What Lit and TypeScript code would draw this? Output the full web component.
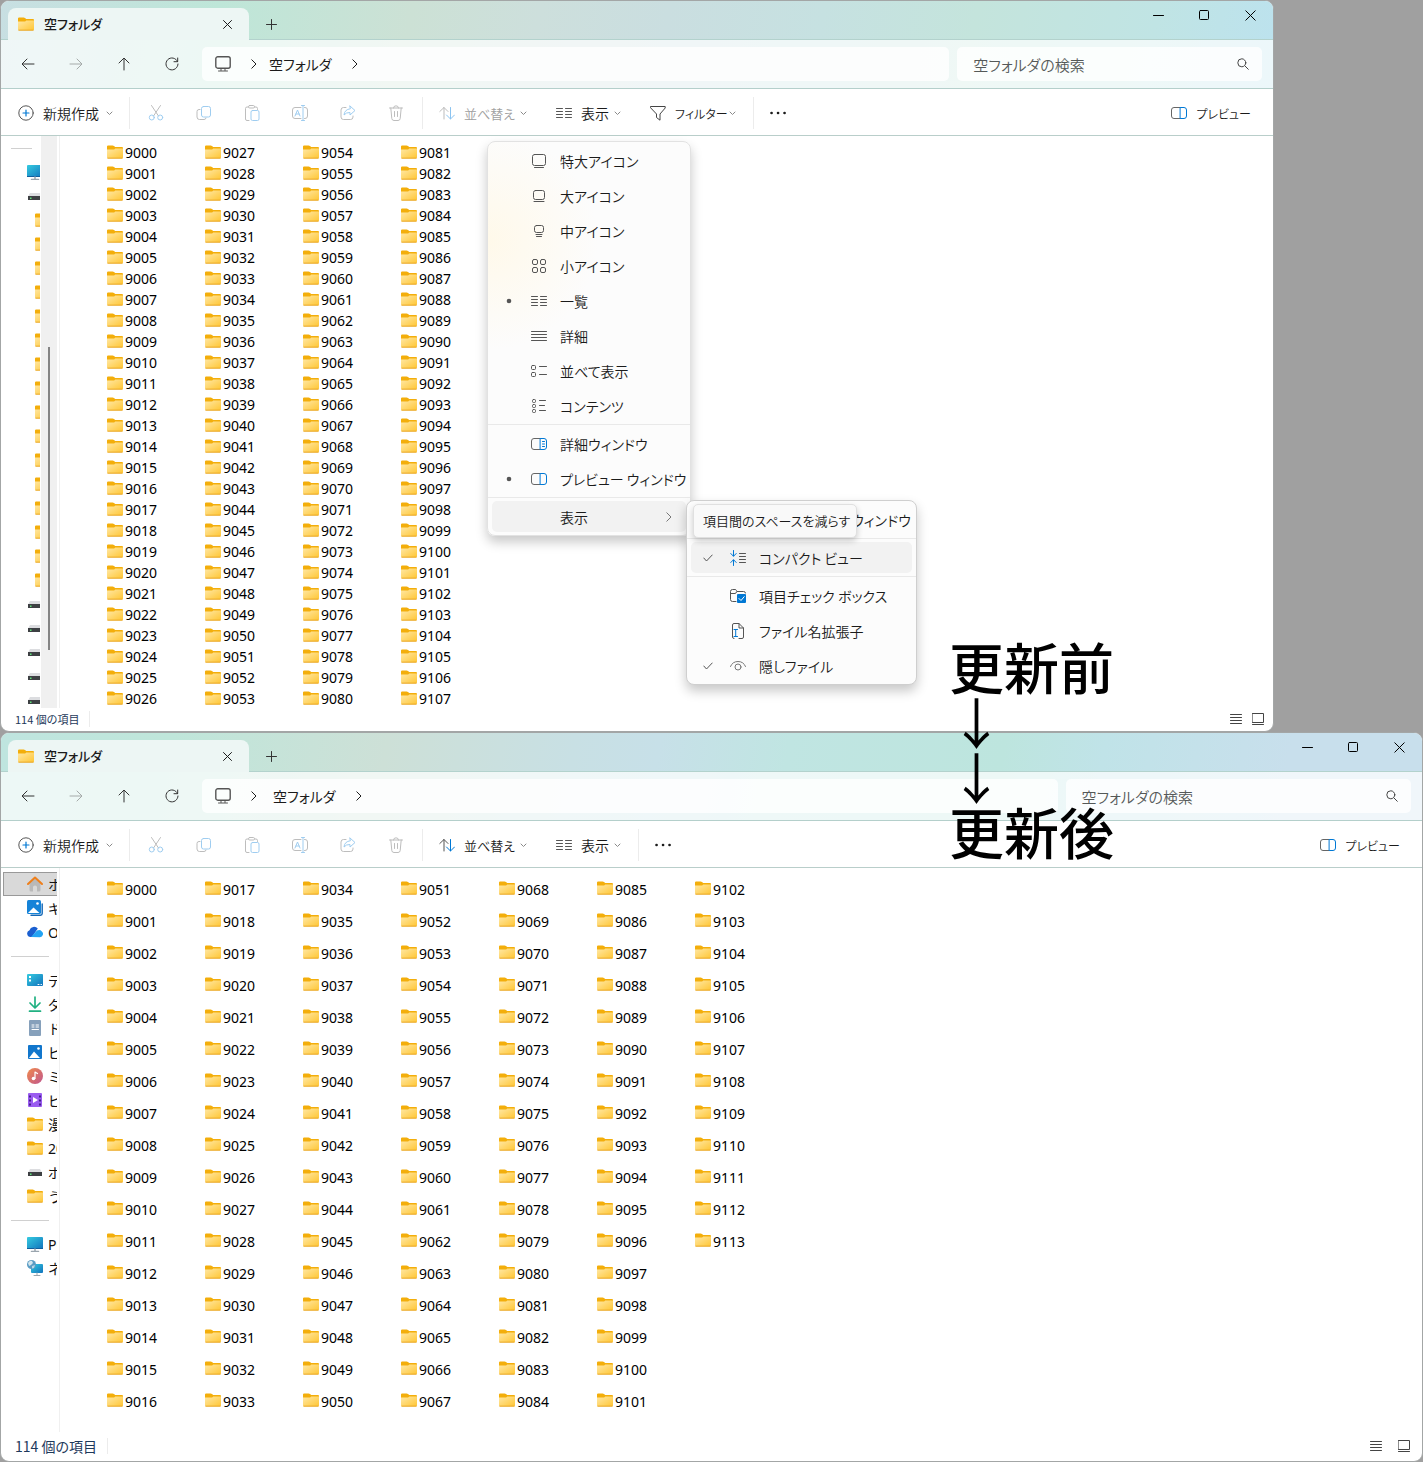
import { LitElement, html, svg, css, nothing, TemplateResult, SVGTemplateResult } from "lit";
import { customElement, property } from "lit/decorators.js";

const BLUE = "#0078d4";

const icon = (w: number, h: number, body: SVGTemplateResult) => html`<svg
  class="icon" width=${w} height=${h} viewBox="0 0 ${w} ${h}" fill="none"
  stroke="currentColor" stroke-width="1" stroke-linecap="round" stroke-linejoin="round"
  aria-hidden="true">${body}</svg>`;

const i16 = (body: SVGTemplateResult) => icon(16, 16, body);

const folder = () => icon(16, 14, svg`
  <path d="M0 3V1.6Q0 .5 1.1 .5H5.6Q6.4 .5 7 1L8.2 2H15Q16 2 16 3V5H0Z" fill="#f3ae0b" stroke="none"/>
  <path d="M0 12.3V4.6H6.3Q7 4.6 7.5 4.2L8.2 3.4H16V12.3Q16 13.3 15 13.3H1Q0 13.3 0 12.3Z" fill="url(#g-folder)" stroke="none"/>
  <path d="M.8 13.2H15.2" stroke="#e9a520"/>`);

const drive = () => i16(svg`
  <path d="M3 5H13L15 8.5H1Z" fill="#dcdde0" stroke="none"/>
  <rect x="1" y="8" width="14" height="4" fill="#3d4043" stroke="none"/>
  <rect x="3" y="9.5" width="1.5" height="1.5" fill="#5fe07a" stroke="none"/>`);

const pc = () => i16(svg`
  <rect x="0" y="1" width="16" height="12" rx="1" fill="url(#g-screen)" stroke="none"/>
  <path d="M0 12.5H16" stroke="#0f5f9e"/>
  <path d="M8 13V15M4.500 15.500H11.500" stroke="#9aa5ae" stroke-width="1.500"/>`);

const network = () => i16(svg`
  <rect x="4" y="4" width="12" height="9" rx="1" fill="url(#g-screen)" stroke="none"/>
  <path d="M10 13V15M7 15.500H13" stroke="#9aa5ae"/>
  <circle cx="4.500" cy="4.500" r="4.500" fill="#5a9cc4" stroke="none"/>
  <path d="M1 3Q3 0 5 1L6 3L4 5L2 6Z" fill="#d4e6ee" stroke="none"/><path d="M5 6L8 5L7 8L5 8.500Z" fill="#b8d6e4" stroke="none"/>`);

const home = () => i16(svg`
  <path d="M2.500 7L8 2L13.500 7V14Q13.500 15.500 12 15.500H10V11Q10 9.500 8 9.500T6 11V15.500H4Q2.500 15.500 2.500 14Z" fill="#b9b9b9" stroke="none"/>
  <path d="M1 8L8 1.500L15 8" stroke="#ee7f1b" stroke-width="2"/>`);

const gallery = () => i16(svg`
  <path d="M4 15.200H13.500Q15.200 15.200 15.200 13.500V4" stroke="#1367b5" stroke-width="1.400"/>
  <rect x="0" y="0" width="14" height="14" rx="1.500" fill="#1583d8" stroke="none"/>
  <path d="M1 13L6.500 7.500L12.500 13Z" fill="#fff" stroke="none"/><circle cx="10.500" cy="3.500" r="1.300" fill="#fff" stroke="none"/>`);

const cloud = () => i16(svg`
  <path d="M3.500 13A3.500 3.500 0 0 1 2.500 6.200A4.800 4.800 0 0 1 10.800 4.600L5 13Z" fill="#1a5fd0" stroke="none"/>
  <path d="M4 13L10 6.500Q13 5 14.600 7.200A3.300 3.300 0 0 1 13 13.200Z" fill="#22a3f3" stroke="none"/>`);

const desktop = () => i16(svg`
  <rect x="0" y="2" width="16" height="12" rx="1" fill="url(#g-screen)" stroke="none"/>
  <path d="M2 5H4M2 8.500H4" stroke="#fff" stroke-width="1.800" stroke-linecap="butt"/><path d="M11 12.500H12M14 12.500H14.500" stroke="#fff"/>`);

const download = () => i16(svg`
  <path d="M8 1V11.500M3 7L8 12L13 7M2.500 15.200H13.500" stroke="#21b182" stroke-width="1.700"/>`);

const documents = () => i16(svg`
  <rect x="2" y="0" width="12" height="16" rx="1" fill="#86a0bb" stroke="none"/>
  <path d="M5 5H7M5 7H7M9 5H11.500M9 7H11.500M5 9.500H11.500" stroke="#fff"/>`);

const pictures = () => i16(svg`
  <rect x="1" y="1" width="14" height="14" rx="1" fill="#1176cc" stroke="none"/>
  <path d="M2 14L7 7.500L13 14Z" fill="#fff" stroke="none"/><circle cx="11.500" cy="4.500" r="1.300" fill="#fff" stroke="none"/>`);

const music = () => i16(svg`
  <circle cx="8" cy="8" r="8" fill="url(#g-music)" stroke="none"/>
  <circle cx="6.500" cy="10.500" r="1.800" fill="#fff" stroke="none"/><path d="M8 10.500V4L10.500 5.500" stroke="#fff" stroke-width="1.200"/>`);

const video = () => i16(svg`
  <rect x="1" y="1" width="14" height="14" rx="1" fill="#9a5cf0" stroke="none"/>
  <path d="M3 3.500V14M13 3.500V14" stroke="#3c1a80" stroke-width="1.800" stroke-linecap="butt" stroke-dasharray="2 2"/><path d="M6 5L11 8L6 11Z" fill="#fff" stroke="none"/>`);

const chevronDown = () => icon(7, 5, svg`<path d="M1 1L3.500 3.500L6 1" stroke="#8a8a8a"/>`);
const chevronRight = () => icon(6, 10, svg`<path d="M.8 .8L5 5L.8 9.200"/>`);
const lines2 = () => i16(svg`<path d="M.5 3.500H6.500M9.500 3.500H15.500M.5 6.500H6.500M9.500 6.500H15.500M.5 9.500H6.500M9.500 9.500H15.500M.5 12.500H6.500M9.500 12.500H15.500" stroke="#555"/>`);
const lines4 = () => i16(svg`<path d="M.5 3.500H15.500M.5 6.500H15.500M.5 9.500H15.500M.5 12.500H15.500" stroke="#555"/>`);
const pane = () => i16(svg`
  <path d="M9 2.500H3Q.5 2.500 .5 5V11Q.5 13.500 3 13.500H9" stroke="#666"/>
  <path d="M9.500 2.500H13Q15.500 2.500 15.500 5V11Q15.500 13.500 13 13.500H9.500Z" stroke=${BLUE}/>`);
const detailPane = () => i16(svg`
  <path d="M9 2.500H3Q.5 2.500 .5 5V11Q.5 13.500 3 13.500H9" stroke="#666"/>
  <path d="M9.500 2.500H13Q15.500 2.500 15.500 5V11Q15.500 13.500 13 13.500H9.500ZM11.500 5.500H13.500M11.500 8H13.500M11.500 10.500H13.500" stroke=${BLUE}/>`);
const cross = () => icon(11, 11, svg`<path d="M.8 .8L10.200 10.200M10.200 .8L.8 10.200"/>`);
const check = () => icon(10, 8, svg`<path d="M.8 4L3.500 7L9.200 1" stroke="#555"/>`);
const dot = () => icon(6, 6, svg`<circle cx="3" cy="3" r="2.300" fill="#555" stroke="none"/>`);

const defs = () => html`<svg class="defs" width="0" height="0" aria-hidden="true"><defs>
  <linearGradient id="g-folder" x1="0" y1="0" x2="1" y2="1"><stop offset="0" stop-color="#ffe8a6"/><stop offset="1" stop-color="#ffc634"/></linearGradient>
  <linearGradient id="g-screen" x1="0" y1="0" x2="1" y2="1"><stop offset="0" stop-color="#35cbe0"/><stop offset="1" stop-color="#1173bd"/></linearGradient>
  <linearGradient id="g-music" x1="0" y1="0" x2="1" y2="1"><stop offset="0" stop-color="#f08a4b"/><stop offset="1" stop-color="#c0568e"/></linearGradient>
</defs></svg>`;

const base = css`
  *, *::before { box-sizing: border-box; }
  :host { font-family: "Noto Sans", "Noto Sans CJK JP", sans-serif; font-size: 14px; color: #1b1b1b; }
  button, input, a { font: inherit; color: inherit; background: none; border: 0; margin: 0; padding: 0; text-decoration: none; }
  ul { list-style: none; margin: 0; padding: 0; }
  .icon { display: block; flex: none; }
  .defs { position: absolute; }
  .jp { font-family: "Noto Sans CJK JP", sans-serif; font-feature-settings: "palt"; white-space: nowrap; }
`;

interface Place { icon: () => TemplateResult; label: string; nested?: boolean; selected?: boolean; }
const SEPARATOR = null;

const scrolledPlaces: (Place | null)[] = [
  SEPARATOR,
  { icon: pc, label: "" },
  { icon: drive, label: "" },
  ...Array.from({ length: 16 }, () => ({ icon: folder, label: "", nested: true })),
  ...Array.from({ length: 5 }, () => ({ icon: drive, label: "" })),
];

const places: (Place | null)[] = [
  { icon: home, label: "ホーム", selected: true },
  { icon: gallery, label: "ギャラリー" },
  { icon: cloud, label: "OneDrive" },
  SEPARATOR,
  { icon: desktop, label: "デスクトップ" },
  { icon: download, label: "ダウンロード" },
  { icon: documents, label: "ドキュメント" },
  { icon: pictures, label: "ピクチャ" },
  { icon: music, label: "ミュージック" },
  { icon: video, label: "ビデオ" },
  { icon: folder, label: "漫画" },
  { icon: folder, label: "20" },
  { icon: drive, label: "ボリューム" },
  { icon: folder, label: "うち" },
  SEPARATOR,
  { icon: pc, label: "PC" },
  { icon: network, label: "ネットワーク" },
];

@customElement("explorer-window")
class ExplorerWindow extends LitElement {
  @property({ type: Boolean, reflect: true }) compact = false;

  static styles = [base, css`
    :host { display: block; }
    .window { border: 1px solid #a3a6a6; border-radius: 9px; overflow: hidden; background: #fff; }
    .head { background: linear-gradient(100deg, #bfe5df, #bfe6da 12%, #cde0d7 27%, #c8e0e4 40%, #c7e0e8 46%, #c0e5e2 55%, #bde5de 70%, #c0e3e8 77%, #c8dfec 90%); }
    :host([compact]) .head { background: linear-gradient(100deg, #c8dfe2, #bee6d8 17%, #cce1d5 32%, #cddfdc 42%, #cadee0 52%, #c6e1e1 64%, #c4e4dc 76%, #c0e4e4 90%, #bce2ee); }
    .title { display: flex; height: 39px; box-shadow: inset 0 -1px #b3d2cd; }
    .tab { display: flex; align-items: center; width: 241px; margin: 7px 0 0 7px; padding: 0 17px 0 10px; border-radius: 8px 8px 0 0; background: #edf6f4; }
    .tab .jp { flex: 1; margin-left: 10px; font-size: 13px; font-weight: 500; line-height: 20px; }
    .new-tab { width: 46px; padding: 8px 0 0 17px; }
    .system { display: flex; height: 28px; margin-left: auto; color: #000; }
    .system button { width: 46px; display: grid; place-items: center; }
    .nav { display: flex; height: 49px; padding: 7px 11px 7px 3px; background: rgba(255, 255, 255, .72); border-bottom: 1px solid #b4cfcb; }
    .nav > button { width: 48px; display: grid; place-items: center; color: #333; }
    .nav > button:disabled { color: #a5aaa9; }
    .address, .search { display: flex; align-items: center; height: 34px; border-radius: 5px; background: rgba(255, 255, 255, .78); flex: 727 1 0; min-width: 0; }
    .address { margin-left: 6px; padding-left: 13px; }
    .address .monitor { margin-right: 20px; }
    .address .crumb { margin: 0 20px 0 16px; }
    :host([compact]) .address .crumb { margin-left: 12px; }
    .search { flex-grow: 273; margin-left: 8px; padding: 0 13px 0 16px; color: #444; }
    .search input { flex: 1; min-width: 0; outline: 0; font-size: 15px; font-weight: 350; }
    .search input::placeholder { color: #555958; opacity: 1; }
    .commands { display: flex; align-items: center; height: 47px; padding: 2px 0 0 9px; border-bottom: 1px solid #b9ceca; }
    .commands button { display: flex; align-items: center; height: 32px; padding-left: 8px; }
    .commands button .jp { flex: 1; text-align: left; margin-left: 9px; font-weight: 350; }
    .commands .wide { width: 119px; padding-right: 16px; }
    .commands .sort { width: 105px; margin-left: 8px; padding-right: 9px; }
    .commands .view { width: 79px; padding-right: 6px; margin-left: 12px; }
    .commands .filter { width: 100px; margin-left: 15px; padding-right: 6px; }
    .commands .sort .jp { font-size: 13px; }
    .commands .filter .jp, .commands .preview .jp { font-size: 12px; }
    .commands .tool { width: 48px; padding: 0 16px; }
    .commands .more { margin-left: 8px; }
    .commands .preview { margin-left: auto; padding-right: 22px; }
    .commands button:disabled { color: #a0a0a0; }
    .rule { width: 1px; height: 32px; background: #ececec; }
    .tools { display: flex; margin: 0 2px; }
    .view + .rule, .filter + .rule { margin-left: 11px; }
    .body { display: flex; }
    .side { display: flex; width: 59px; height: 564px; border-right: 1px solid #f0f0f0; }
    :host([compact]) .side { height: 572px; }
    .places { width: 56px; overflow: hidden; padding-top: 4px; }
    :host([compact]) .places { width: 39px; padding-top: 0; }
    .place { display: flex; align-items: center; gap: 5px; width: 120px; height: 24px; margin-left: 2px; padding-left: 24px; white-space: nowrap; color: #111; }
    .place.selected { background: #d9d9d9; box-shadow: inset 0 0 0 1px #999; }
    .place.nested { padding-left: 32px; }
    .split { height: 24px; padding: 12px 8px 0 10px; }
    .split::before { content: ""; display: block; height: 1px; background: #d0d0d0; }
    .scroll { width: 16px; margin-left: 1px; background: #f0f0f0; }
    .thumb { width: 2px; height: 303px; margin: 211px 0 0 7px; background: #858585; }
    .files { display: grid; grid-auto-flow: column; grid-auto-columns: 98px; grid-template-rows: repeat(17, 32px); padding: 5px 0 0 47px; color: #000; }
    :host([compact]) .files { grid-template-rows: repeat(27, 21px); padding-top: 6px; margin-bottom: -1px; }
    .files a { display: flex; align-items: center; gap: 2px; height: 100%; }
    .files .icon { margin-bottom: 2px; }
    .status { display: flex; align-items: center; height: 29px; padding: 0 12px 1px 14px; color: #1e395b; }
    :host([compact]) .status { height: 23px; font-size: 11px; padding-right: 9px; }
    .status .rule { height: 16px; margin-left: 10px; }
    .modes { display: flex; gap: 16px; margin-left: auto; color: #444; }
    :host([compact]) .modes { gap: 10px; }
  `];

  private command(cls: string, glyph: TemplateResult, label: string, disabled = false) {
    return html`<button class=${cls} ?disabled=${disabled}>${glyph}<span class="jp">${label}</span>${cls === "preview" ? nothing : chevronDown()}</button>`;
  }

  private tools() {
    const g = "#bdbdbd";
    const b = "#9fcdf0";
    const list: [string, SVGTemplateResult][] = [
      ["切り取り", svg`<path d="M3.500 .5L10.500 11M12.500 .5L5.500 11" stroke=${g}/><circle cx="3.800" cy="12.500" r="2.500" stroke=${b}/><circle cx="12.200" cy="12.500" r="2.500" stroke=${b}/>`],
      ["コピー", svg`<path d="M4 4.500H3Q1 4.500 1 6.500V12Q1 14.500 3.500 14.500H8Q10 14.500 10 13" stroke=${g}/><rect x="5.500" y="1.500" width="9" height="10.500" rx="2" stroke=${b}/>`],
      ["貼り付け", svg`<path d="M5 15.500H3Q1.500 15.500 1.500 14V3.500Q1.500 2 3 2H4.500M10.500 2H12Q13.500 2 13.500 3.500V4.500" stroke=${g}/><rect x="4.500" y=".5" width="6" height="2.500" rx="1.200" stroke=${g}/><rect x="7" y="5.500" width="8" height="10" rx="1.500" stroke=${b}/>`],
      ["名前の変更", svg`<path d="M9 2.500H3Q.5 2.500 .5 5V11Q.5 13.500 3 13.500H9M12.500 2.500H13Q15.500 2.500 15.500 5V11Q15.500 13.500 13 13.500H12.500" stroke=${g}/><path d="M9.500 .5H12.500M9.500 15.500H12.500M11 .5V15.500M3 11L5.500 5L8 11M4 9H7" stroke=${b}/>`],
      ["共有", svg`<path d="M6 2.500H3.500Q1 2.500 1 5V12Q1 14.500 3.500 14.500H10.500Q13 14.500 13 12V11" stroke=${g}/><path d="M10 1L15 5.500L10 10V7.500Q6 7.300 4 10Q4.500 4.500 10 3.800Z" stroke=${b}/>`],
      ["削除", svg`<path d="M1.500 3H14.500M5.500 3Q5.500 .8 8 .8T10.500 3M2.800 3L3.800 13.500Q4 15.500 6 15.500H10Q12 15.500 12.200 13.500L13.200 3M6.500 6.500V11.500M9.500 6.500V11.500" stroke=${g}/>`],
    ];
    return html`<div class="tools">${list.map(([name, body]) => html`<button class="tool" aria-label=${name} disabled>${i16(body)}</button>`)}</div>`;
  }

  render() {
    const sortOff = this.compact;
    return html`${defs()}
      <section class="window">
        <header class="head">
          <div class="title">
            <div class="tab">${folder()}<span class="jp">空フォルダ</span><button aria-label="タブを閉じる">${icon(9, 9, svg`<path d="M.5 .5L8.500 8.500M8.500 .5L.5 8.500"/>`)}</button></div>
            <button class="new-tab" aria-label="新しいタブ">${icon(11, 11, svg`<path d="M5.500 .5V10.500M.5 5.500H10.500" stroke="#333"/>`)}</button>
            <div class="system">
              <button aria-label="最小化">${icon(11, 11, svg`<path d="M.5 5.500H10.500"/>`)}</button>
              <button aria-label="最大化">${icon(11, 11, svg`<rect x=".5" y=".5" width="9" height="9" rx="1"/>`)}</button>
              <button aria-label="閉じる">${cross()}</button>
            </div>
          </div>
          <nav class="nav">
            <button aria-label="戻る">${i16(svg`<path d="M14 8H2.500M7 3L2 8L7 13"/>`)}</button>
            <button aria-label="進む" disabled>${i16(svg`<path d="M2 8H13.500M9 3L14 8L9 13"/>`)}</button>
            <button aria-label="上へ">${i16(svg`<path d="M8 14V2.500M3 7L8 2L13 7"/>`)}</button>
            <button aria-label="更新">${i16(svg`<path d="M13.500 5.500A6 6 0 1 0 14 8M13.700 2V5.700H10"/>`)}</button>
            <div class="address">
              <span class="monitor">${i16(svg`<rect x=".8" y=".8" width="14.400" height="11.400" rx="2" stroke="#555" stroke-width="1.400"/><path d="M6 12.500V14.500M10 12.500V14.500M3.500 15H12.500" stroke="#555"/>`)}</span>
              ${chevronRight()}<a class="crumb jp" href="#">空フォルダ</a>${chevronRight()}
            </div>
            <label class="search"><input class="jp" type="text" aria-label="検索" placeholder="空フォルダの検索" />
              ${icon(12, 12, svg`<circle cx="4.800" cy="4.800" r="4"/><path d="M8 8L11.300 11.300"/>`)}</label>
          </nav>
        </header>
        <div class="commands">
          ${this.command("wide", i16(svg`<circle cx="8" cy="8" r="7.200" stroke="#555"/><path d="M8 5V11M5 8H11" stroke=${BLUE} stroke-width="1.200"/>`), "新規作成")}
          <span class="rule"></span>
          ${this.tools()}
          <span class="rule"></span>
          ${this.command("sort", i16(svg`<path d="M5 14V2.500M.8 6.500L5 2.500L9 6.500" stroke=${sortOff ? "#bbb" : "#555"}/><path d="M11.500 2.500V14M7.500 10L11.500 14L15.500 10" stroke=${sortOff ? "#8ac3f0" : BLUE}/>`), "並べ替え", sortOff)}
          ${this.command("view", lines2(), "表示")}
          ${this.compact ? this.command("filter", i16(svg`<path d="M.8 1.500H15.200V3L10 9V15.200L6.500 12.500V9L.8 3Z" stroke="#444"/>`), "フィルター") : nothing}
          <span class="rule"></span>
          <button class="more" aria-label="もっと見る">${i16(svg`<path d="M1.500 8H1.600M8 8H8.100M14.500 8H14.600" stroke-width="2.600"/>`)}</button>
          ${this.command("preview", pane(), "プレビュー")}
        </div>
        <div class="body">
          <aside class="side">
            <div class="places">
              ${(this.compact ? scrolledPlaces : places).map((p) => p
                ? html`<a href="#" class="place ${p.nested ? "nested" : ""} ${p.selected ? "selected" : ""}">${p.icon()}${p.label}</a>`
                : html`<div class="split"></div>`)}
            </div>
            ${this.compact ? html`<div class="scroll"><div class="thumb"></div></div>` : nothing}
          </aside>
          <ul class="files">
            ${Array.from({ length: this.compact ? 108 : 114 }, (_, i) => html`<li><a href="#">${folder()}${9000 + i}</a></li>`)}
          </ul>
        </div>
        <footer class="status">
          <span class="jp">114 個の項目</span><span class="rule"></span>
          <div class="modes">
            ${icon(12, 12, svg`<path d="M.5 1.500H11.500M.5 4.500H11.500M.5 7.500H11.500M.5 10.500H11.500"/>`)}
            ${icon(12, 12, svg`<path d="M.5 .5H11.500V9.500H.5ZM.5 11.500H11.500"/>`)}
          </div>
        </footer>
      </section>`;
  }
}

interface Entry { label: string; icon?: TemplateResult; mark?: TemplateResult; hot?: boolean; more?: boolean; }

const viewMenu: (Entry | null)[] = [
  { label: "特大アイコン", icon: i16(svg`<rect x="1.500" y="1.500" width="13" height="11" rx="2" stroke="#555"/><path d="M3.500 14.500H12.500" stroke="#555"/>`) },
  { label: "大アイコン", icon: i16(svg`<rect x="2.500" y="2.500" width="11" height="9" rx="2" stroke="#555"/><path d="M3 13.500H13" stroke="#555"/>`) },
  { label: "中アイコン", icon: i16(svg`<rect x="3.500" y="2.500" width="9" height="7" rx="2" stroke="#555"/><path d="M5 11.500H11M5.500 13.500H10.500" stroke="#555"/>`) },
  { label: "小アイコン", icon: i16(svg`<rect x="1.500" y="1.500" width="5" height="5" rx="1.500" stroke="#555"/><rect x="9.500" y="1.500" width="5" height="5" rx="1.500" stroke="#555"/><rect x="1.500" y="9.500" width="5" height="5" rx="1.500" stroke="#555"/><rect x="9.500" y="9.500" width="5" height="5" rx="1.500" stroke="#555"/>`) },
  { label: "一覧", icon: lines2(), mark: dot() },
  { label: "詳細", icon: lines4() },
  { label: "並べて表示", icon: i16(svg`<rect x=".5" y="2.500" width="4" height="4" rx="1" stroke="#555"/><rect x=".5" y="9.500" width="4" height="4" rx="1" stroke="#555"/><path d="M8.500 3.500H15.500M8.500 11.500H15.500" stroke="#555"/>`) },
  { label: "コンテンツ", icon: i16(svg`<rect x="1.500" y="1.500" width="3" height="3" rx="1" stroke="#555"/><rect x="1.500" y="6.500" width="3" height="3" rx="1" stroke="#555"/><rect x="1.500" y="11.500" width="3" height="3" rx="1" stroke="#555"/><path d="M8.500 2.500H14.500M8.500 7.500H13.500M8.500 12.500H14.500" stroke="#555"/>`) },
  null,
  { label: "詳細ウィンドウ", icon: detailPane() },
  { label: "プレビュー ウィンドウ", icon: pane(), mark: dot() },
  null,
  { label: "表示", hot: true, more: true },
];

const showMenu: (Entry | null)[] = [
  { label: "ナビゲーション ウィンドウ" },
  null,
  { label: "コンパクト ビュー", mark: check(), hot: true, icon: i16(svg`<path d="M3.500 .5V6M.8 3.500L3.500 6.300L6.200 3.500M3.500 15.500V10M.8 12.500L3.500 9.700L6.200 12.500" stroke=${BLUE}/><path d="M9.500 3.500H15.500M9.500 6.500H15.500M9.500 9.500H15.500M9.500 12.500H15.500" stroke="#555"/>`) },
  null,
  { label: "項目チェック ボックス", icon: i16(svg`<path d="M6 13.500H2.500Q.5 13.500 .5 11.500V3.500Q.5 1.500 2.500 1.500H5Q6 1.500 6.500 2.500L7 3.500H13.500Q15.500 3.500 15.500 5M.5 5.500H5Q6 5.500 7 3.500" stroke="#555"/><rect x="7" y="6" width="9" height="9" rx="1" fill=${BLUE} stroke="none"/><path d="M9 10.500L11 12.500L14.200 8.700" stroke="#fff"/>`) },
  { label: "ファイル名拡張子", icon: i16(svg`<path d="M4 15.500Q2.500 15.500 2.500 14V2Q2.500 .5 4 .5H9L13.500 5V14Q13.500 15.500 12 15.500H9M9 .5V5H13.500" stroke="#555"/><path d="M4 6.500H7.500M4 13.500H7.500M5.700 6.500V13.500" stroke=${BLUE}/>`) },
  { label: "隠しファイル", mark: check(), icon: i16(svg`<path d="M.5 8.500Q2.500 3.500 8 3.500T15.500 8.500" stroke="#777"/><circle cx="8" cy="9" r="3" stroke="#777"/>`) },
];

@customElement("app-root")
class AppRoot extends LitElement {
  static styles = [base, css`
    :host { display: block; position: relative; background: #a0a0a0; overflow: hidden; }
    .before { margin-right: 149px; }
    .menu { position: absolute; padding: 1px 0; border: 1px solid #e2e2e2; border-radius: 8px; background: #fcfcfc; box-shadow: 0 6px 12px rgba(0, 0, 0, .22); }
    .view-menu { left: 487px; top: 141px; width: 204px; background: radial-gradient(circle at 0 25%, #fff9ea, #fcfcfc 110px); }
    .show-menu { left: 686px; top: 500px; width: 231px; border-color: #cfcfcf; }
    .entry { display: flex; width: 100%; height: 35px; padding: 2px 4px; }
    .entry .face { flex: 1; display: flex; align-items: center; border-radius: 5px; text-align: left; }
    .entry.hot .face { background: #f2f2f2; }
    .mark { display: grid; place-items: center; width: 34px; }
    .glyph { width: 34px; padding-left: 5px; }
    .face .jp { flex: 1; font-weight: 350; }
    .face > .icon { margin-right: 14px; color: #777; }
    .divide { height: 3px; padding-top: 1px; }
    .divide::before { content: ""; display: block; height: 1px; background: #e9e9e9; }
    .tip { position: absolute; left: 693px; top: 504px; padding: 0 9px; width: 164px; border: 1px solid #e0e0e0; border-radius: 5px; background: #f9f9f9; box-shadow: 0 3px 6px rgba(0, 0, 0, .2); font-size: 13px; font-weight: 350; line-height: 32px; }
    .note { position: absolute; left: 949px; top: 638px; margin: 0; font: 500 55px/55px "Noto Sans CJK JP", sans-serif; color: #000; }
    .note span { display: block; }
    .note .arrow { font-weight: 400; }
  `];

  private menu(cls: string, label: string, entries: (Entry | null)[]) {
    return html`<div class="menu ${cls}" role="menu" aria-label=${label}>${entries.map((e) => e
      ? html`<button class="entry ${e.hot ? "hot" : ""}" role="menuitem"><span class="face"><span class="mark">${e.mark ?? nothing}</span><span class="glyph">${e.icon ?? nothing}</span><span class="jp">${e.label}</span>${e.more ? chevronRight() : nothing}</span></button>`
      : html`<div class="divide" role="separator"></div>`)}</div>`;
  }

  render() {
    return html`
      <explorer-window class="before" compact></explorer-window>
      <explorer-window></explorer-window>
      ${this.menu("view-menu", "表示", viewMenu)}
      ${this.menu("show-menu", "表示", showMenu)}
      <div class="tip jp" role="tooltip">項目間のスペースを減らす</div>
      <p class="note"><span>更新前</span><span class="arrow">↓</span><span class="arrow">↓</span><span>更新後</span></p>`;
  }
}
